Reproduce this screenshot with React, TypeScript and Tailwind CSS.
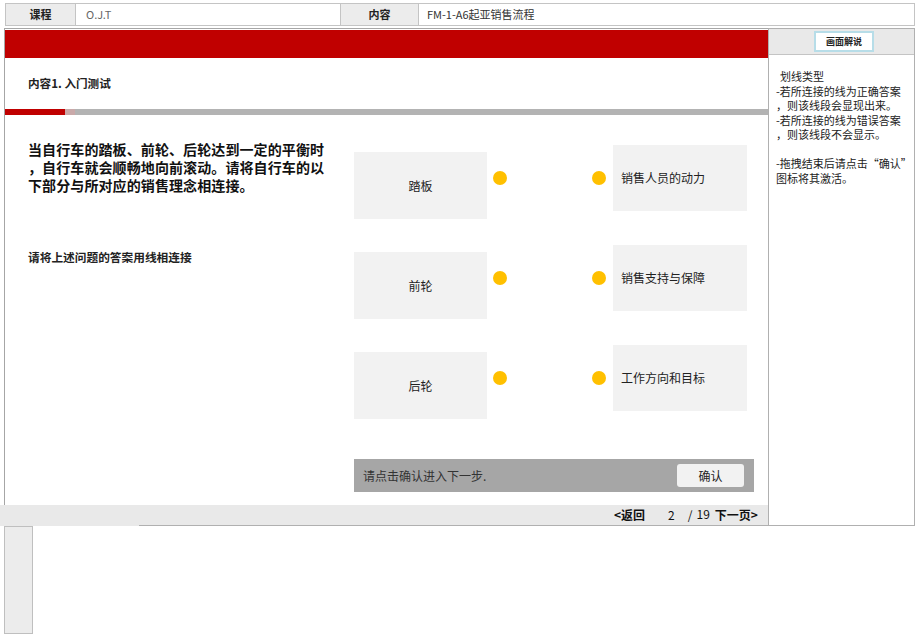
import React from "react";

const font = { fontFamily: '"Noto Sans CJK SC", "Noto Sans", sans-serif' };

function Dot() {
  return <div className="w-[14px] h-[14px] rounded-full bg-[#ffc000] shrink-0" />;
}

function Row({ left, right }: { left: string; right: string }) {
  return (
    <div className="flex items-start h-[74px]">
      <div className="mt-[7px] w-[133px] h-[67px] bg-[#f2f2f2] flex items-center justify-center text-[12px] text-[#222]">
        {left}
      </div>
      <div className="mt-[26px] ml-[6px]">
        <Dot />
      </div>
      <div className="mt-[26px] ml-[85px]">
        <Dot />
      </div>
      <div className="ml-[7px] w-[134px] h-[66px] bg-[#f2f2f2] flex items-center pl-[8px] text-[12px] text-[#222]">
        {right}
      </div>
    </div>
  );
}

export default function App() {
  return (
    <div className="w-[920px] h-[637px] bg-white relative overflow-hidden" style={font}>
      {/* header */}
      <div className="pt-[3px] pl-[5px]">
        <div className="w-[910px] h-[23px] flex border border-[#c4c4c4] text-[11px]">
          <div className="w-[70px] bg-[#ececec] border-r border-[#c4c4c4] flex items-center justify-center font-bold text-[#222]">
            课程
          </div>
          <div className="w-[265px] bg-white border-r border-[#c4c4c4] flex items-center pl-[10px] text-[#666]">
            O.J.T
          </div>
          <div className="w-[78px] bg-[#ececec] border-r border-[#c4c4c4] flex items-center justify-center font-bold text-[#222]">
            内容
          </div>
          <div className="flex-1 bg-white flex items-center pl-[8px] text-[#333]">FM-1-A6起亚销售流程</div>
        </div>
      </div>

      {/* main */}
      <div className="flex mt-[2px]">
        <div className="w-[768px] flex flex-col">
          <div className="ml-[4px] h-[477px] border-l border-t border-[#a6a6a6] flex flex-col">
            <div className="mt-[1px] h-[28px] bg-[#c00000]" />
            <div className="h-[51px] flex items-center pl-[23px] text-[11.6px] font-bold text-[#222]">
              内容1. 入门测试
            </div>
            <div className="h-[6px] flex bg-[#b3b3b3]">
              <div className="w-[60px] bg-[#c00000]" />
              <div className="w-[10px] bg-[#c9a9a9]" />
            </div>
            <div className="flex">
              <div className="w-[349px] pl-[23px] pt-[25px]">
                <div className="text-[14px] leading-[18px] font-bold text-[#111] tracking-[0.1px]">
                  <div>当自行车的踏板、前轮、后轮达到一定的平衡时</div>
                  <div>，自行车就会顺畅地向前滚动。请将自行车的以</div>
                  <div>下部分与所对应的销售理念相连接。</div>
                </div>
                <div className="mt-[54px] text-[11.7px] font-bold text-[#222]">请将上述问题的答案用线相连接</div>
              </div>
              <div className="pt-[30px] flex flex-col">
                <div className="flex flex-col gap-[26px]">
                  <Row left="踏板" right="销售人员的动力" />
                  <Row left="前轮" right="销售支持与保障" />
                  <Row left="后轮" right="工作方向和目标" />
                </div>
                <div className="mt-[40px] w-[400px] h-[33px] bg-[#a6a6a6] flex items-center justify-between pl-[9px] pr-[10px]">
                  <span className="text-[12px] text-[#333]">请点击确认进入下一步.</span>
                  <div className="w-[67px] h-[23px] bg-[#f2f2f2] rounded-[3px] flex items-center justify-center text-[12px] text-[#222]">
                    确认
                  </div>
                </div>
              </div>
            </div>
          </div>
          <div className="h-[21px] bg-[#e9e9e9] flex flex-col">
            <div className="flex-1 flex items-center text-[12px] text-[#111]">
              <span className="ml-[614px] font-bold">&lt;返回</span>
              <span className="ml-[23px]">2</span>
              <span className="ml-[13px]">/</span>
              <span className="ml-[4px] -mt-[3px]">19</span>
              <span className="ml-[5px] font-bold">下一页&gt;</span>
            </div>
            <div className="h-px ml-[139px] bg-[#b0b0b0]" />
          </div>
        </div>
        <div className="w-[147px] h-[498px] border border-[#b0b0b0] flex flex-col">
          <div className="h-[26px] bg-[#e9e9e9] border-b border-[#c4c4c4] flex items-center justify-center">
            <div className="w-[60px] h-[21px] bg-white border-2 border-[#b7dde8] flex items-center justify-center text-[9px] font-bold text-[#222] ml-[5px]">
              画面解说
            </div>
          </div>
          <div className="pl-[7px] pt-[14px] text-[11px] leading-[14.5px] text-[#222]">
            <div className="pl-[4px]">划线类型</div>
            <div>-若所连接的线为正确答案</div>
            <div>，则该线段会显现出来。</div>
            <div>-若所连接的线为错误答案</div>
            <div>，则该线段不会显示。</div>
            <div>&nbsp;</div>
            <div>-拖拽结束后请点击“确认”</div>
            <div>图标将其激活。</div>
          </div>
        </div>
      </div>

      {/* bottom small box */}
      <div className="ml-[4px] w-[29px] h-[108px] bg-[#ececec] border border-[#bfbfbf]" />
    </div>
  );
}
